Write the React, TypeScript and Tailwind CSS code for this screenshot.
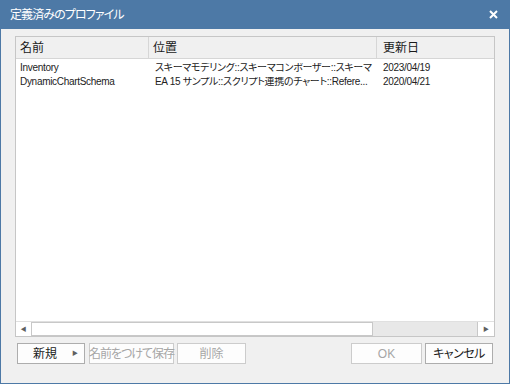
import React from "react";

const font = { fontFamily: '"Liberation Sans", "Noto Sans CJK JP", sans-serif' };

const rows = [
  { name: "Inventory", path: "スキーマモデリング::スキーマコンポーザー::スキーマ", date: "2023/04/19" },
  { name: "DynamicChartSchema", path: "EA 15 サンプル::スクリプト連携のチャート::Refere...", date: "2020/04/21" },
];

function Btn({ label, disabled, arrow, className }: { label: string; disabled?: boolean; arrow?: boolean; className: string }) {
  return (
    <div
      className={`h-[21px] flex items-center justify-center border bg-[#fdfdfd] text-[12px] leading-none whitespace-nowrap relative ${
        disabled ? "border-[#cccccc] text-[#a6a6a6]" : "border-[#adadad] text-[#1a1a1a]"
      } ${className}`}
    >
      <span className={arrow ? "-ml-3" : ""}>{label}</span>
      {arrow && <span className="absolute right-[6px] top-[6px] text-[6px] text-[#606060]">▶</span>}
    </div>
  );
}

export default function App() {
  return (
    <div
      className="w-[510px] h-[384px] bg-[#4d79a6] flex flex-col overflow-hidden [font-feature-settings:'palt']"
      style={font}
    >
      {/* title bar */}
      <div className="h-[29px] flex items-center justify-between pl-[10px] pr-[12px] text-white">
        <span className="text-[12px] tracking-[-0.9px]">定義済みのプロファイル</span>
        <svg width="9" height="9" viewBox="0 0 9 9">
          <path d="M1 1L8 8M8 1L1 8" stroke="white" strokeWidth="2" />
        </svg>
      </div>

      <div className="flex-1 mx-px mb-px bg-[#f0f0f0] flex flex-col px-[14px] pt-[7px]">
        {/* list */}
        <div className="h-[301px] border border-[#c6c6c6] bg-white flex flex-col">
          <div className="h-[22px] flex bg-[#f0f0f0] border-b border-[#d6d6d6] text-[12px] text-[#1a1a1a] pr-px">
            <div className="w-[133px] border-r border-[#d6d6d6] flex items-center pl-[4px]">名前</div>
            <div className="w-[228px] border-r border-[#d6d6d6] flex items-center pl-[4px]">位置</div>
            <div className="flex-1 flex items-center pl-[6px]">更新日</div>
          </div>
          <div className="flex-1 pt-[2px] text-[10px] tracking-[-0.3px] text-[#222222]">
            {rows.map((r) => (
              <div key={r.name} className="h-[14px] flex items-center leading-none">
                <div className="w-[133px] pl-[4px] whitespace-nowrap">{r.name}</div>
                <div className="w-[228px] pl-[6px] pr-[2px] whitespace-nowrap overflow-hidden">{r.path}</div>
                <div className="flex-1 pl-[6px]">{r.date}</div>
              </div>
            ))}
          </div>
          {/* horizontal scrollbar */}
          <div className="h-[15px] flex bg-[#e8e8e8] border-t border-[#e0e0e0]">
            <div className="w-[16px] bg-white border-r border-[#c8c8c8] flex items-center justify-center text-[6px] text-[#606060]">◀</div>
            <div className="w-[341px] bg-white border border-[#c8c8c8] border-l-0" />
            <div className="flex-1" />
            <div className="w-[17px] bg-white border-l border-[#c8c8c8] flex items-center justify-center text-[6px] text-[#606060]">▶</div>
          </div>
        </div>

        {/* buttons */}
        <div className="flex mt-[6px] px-[2px]">
          <Btn label="新規" arrow className="w-[68px]" />
          <Btn label="名前をつけて保存" disabled className="w-[85px] ml-[4px] tracking-[-1px]" />
          <Btn label="削除" disabled className="w-[69px] ml-[3px]" />
          <div className="flex-1" />
          <Btn label="OK" disabled className="w-[71px]" />
          <Btn label="キャンセル" className="w-[68px] ml-[3px] tracking-[-0.5px]" />
        </div>
      </div>
    </div>
  );
}
